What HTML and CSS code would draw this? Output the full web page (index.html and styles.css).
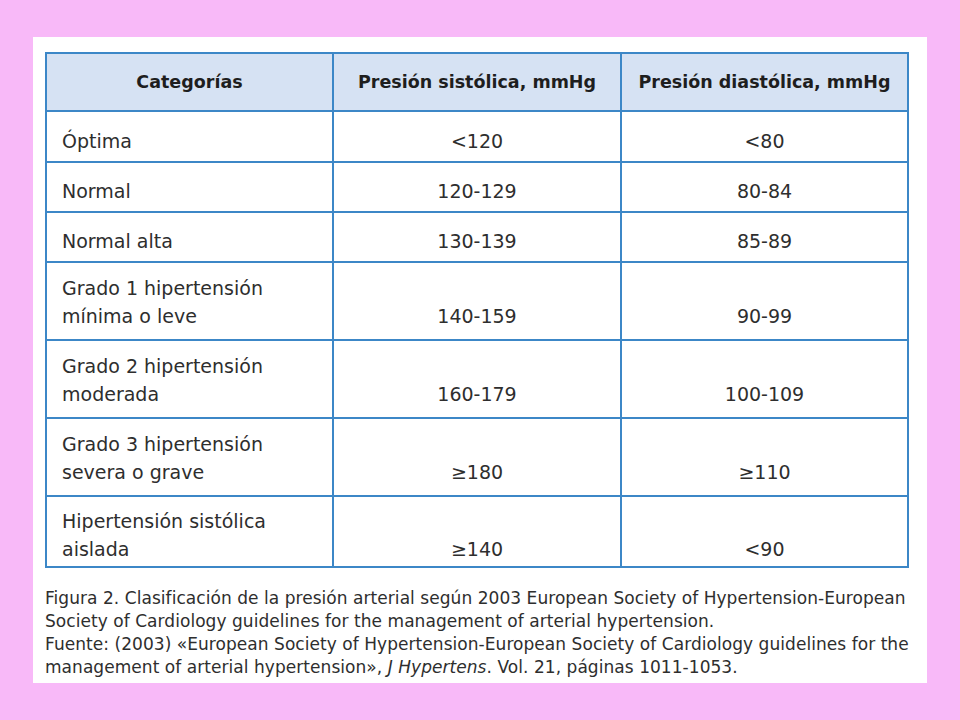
FILE: index.html
```html
<!DOCTYPE html>
<html lang="es">
<head>
<meta charset="utf-8">
<title>Clasificación de la presión arterial</title>
<link rel="stylesheet" href="styles.css">
</head>
<body>
<div class="panel">
  <table class="bp">
    <colgroup><col class="c1"><col class="c2"><col class="c3"></colgroup>
    <thead>
      <tr><th>Categorías</th><th>Presión sistólica, mmHg</th><th>Presión diastólica, mmHg</th></tr>
    </thead>
    <tbody>
      <tr class="one first"><td class="cat">Óptima</td><td>&lt;120</td><td>&lt;80</td></tr>
      <tr class="one"><td class="cat">Normal</td><td>120-129</td><td>80-84</td></tr>
      <tr class="one"><td class="cat">Normal alta</td><td>130-139</td><td>85-89</td></tr>
      <tr class="two"><td class="cat">Grado 1 hipertensión<br>mínima o leve</td><td>140-159</td><td>90-99</td></tr>
      <tr class="two"><td class="cat">Grado 2 hipertensión<br>moderada</td><td>160-179</td><td>100-109</td></tr>
      <tr class="two"><td class="cat">Grado 3 hipertensión<br>severa o grave</td><td>≥180</td><td>≥110</td></tr>
      <tr class="two last"><td class="cat">Hipertensión sistólica<br>aislada</td><td>≥140</td><td>&lt;90</td></tr>
    </tbody>
  </table>
  <p class="caption">Figura 2. Clasificación de la presión arterial según 2003 European Society of Hypertension-European<br>Society of Cardiology guidelines for the management of arterial hypertension.<br>Fuente: (2003) «European Society of Hypertension-European Society of Cardiology guidelines for the<br>management of arterial hypertension», <i>J Hypertens</i>. Vol. 21, páginas 1011-1053.</p>
</div>
</body>
</html>
```
FILE: styles.css
```css
html, body {
  margin: 0;
  padding: 0;
  background: #f8b9f8;
}
body {
  width: 960px;
  height: 720px;
  overflow: hidden;
  font-family: "DejaVu Sans", "Liberation Sans", sans-serif;
  color: #2e2e2e;
}
.panel {
  margin: 37px 0 0 33px;
  width: 894px;
  height: 646px;
  background: #ffffff;
  padding: 15px 0 0 12px;
  box-sizing: border-box;
}
.bp {
  border-collapse: collapse;
  table-layout: fixed;
  width: 862px;
  font-size: 19px;
}
.c1 { width: 287px; }
.c2 { width: 288px; }
.c3 { width: 287px; }
.bp th, .bp td {
  border: 2px solid #3c87c7;
  padding: 0 12px;
  line-height: 28px;
  text-align: center;
}
.bp th {
  background: #d6e2f3;
  font-weight: bold;
  font-size: 17.5px;
  color: #1e1e1e;
  height: 56px;
  vertical-align: middle;
  padding: 0 8px;
}
.bp td.cat {
  text-align: left;
  padding-left: 15px;
}
.bp tr.one td {
  vertical-align: top;
  padding-top: 14px;
  padding-bottom: 6px;
}
.bp tr.one.first td {
  padding-top: 15px;
}
.bp tr.two td {
  vertical-align: bottom;
  padding-top: 11px;
  padding-bottom: 9px;
}
.bp tr.two.last td {
  padding-top: 10px;
  padding-bottom: 3px;
}
.caption {
  margin: 19px 0 0 0;
  font-size: 17px;
  letter-spacing: 0.05px;
  line-height: 23px;
  color: #2e2e2e;
  white-space: nowrap;
}
```
